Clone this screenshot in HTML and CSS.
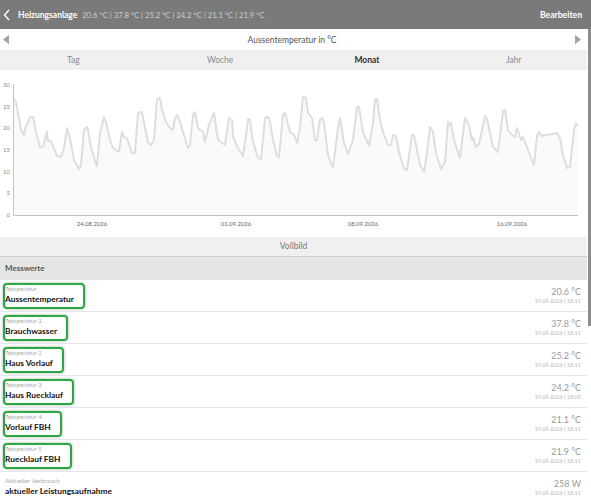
FILE: index.html
```html
<!DOCTYPE html>
<html lang="de">
<head>
    <meta charset="UTF-8">
    <meta name="viewport" content="width=device-width, initial-scale=1.0">
    <title>Heizungsanlage</title>
    <link rel="stylesheet" href="styles.css">
</head>
<body>
    <header class="topbar">
        <svg class="back" width="8" height="12" viewBox="0 0 8 12"><path d="M6 1 L1.5 6 L6 11" fill="none" stroke="#fff" stroke-width="1.4"/></svg>
        <span class="title">Heizungsanlage</span>
        <span class="summary">20.6 °C | 37.8 °C | 25.2 °C | 24.2 °C | 21.1 °C | 21.9 °C</span>
        <span class="edit">Bearbeiten</span>
    </header>

    <main class="content">
        <div class="chart-head">
            <svg width="6" height="9" viewBox="0 0 6 9"><path d="M6 0 L0 4.5 L6 9 Z" fill="#a0a0a0"/></svg>
            <span>Aussentemperatur in °C</span>
            <svg width="6" height="9" viewBox="0 0 6 9"><path d="M0 0 L6 4.5 L0 9 Z" fill="#a0a0a0"/></svg>
        </div>

        <nav class="tabs">
            <span>Tag</span>
            <span>Woche</span>
            <span class="active">Monat</span>
            <span>Jahr</span>
        </nav>

        <div class="chart">
            <svg width="587" height="167" viewBox="0 70 587 167">
                <!-- area + line, one point every few hours -->
                <path class="area" d="M13 215.5 L13,98 16,102 18,113 21,130 24,135 26,125 28,123 30,117 33,117 36,132 40,147 43,147 47,132 48,141 51,141 57,156 61,157 64,148 67,128 70,138 74,160 79,169 81,165 84,130 87,127 88,130 91,147 96,164 97,166 100,133 104,117 106,122 110,140 113,148 117,151 119,151 122,132 124,137 127,138 132,153 135,153 138,113 142,112 144,123 148,142 151,145 154,140 157,99 160,98 162,110 163,112 166,122 170,128 173,130 175,118 177,115 180,122 183,132 187,145 188,148 190,145 193,115 195,112 198,128 200,130 203,132 205,142 209,125 211,120 213,115 214,113 215,120 218,140 225,145 229,118 232,120 233,137 238,148 243,156 247,128 248,119 250,120 253,142 258,158 261,159 265,118 268,117 270,122 273,140 277,156 279,157 283,114 285,113 290,132 294,135 297,143 300,128 303,97 306,98 308,113 312,118 315,140 317,140 320,120 322,118 324,122 328,155 333,168 338,128 340,118 344,143 348,154 353,140 357,107 359,107 363,132 369,146 373,123 375,100 377,99 380,120 383,132 388,145 391,145 393,135 396,136 399,152 404,169 407,170 412,135 414,135 417,150 420,165 424,172 427,153 430,127 433,132 436,153 441,169 445,162 448,122 450,125 451,123 454,140 460,158 465,118 469,125 472,140 473,138 476,147 479,144 485,116 487,119 493,147 498,152 503,111 505,110 508,130 512,135 515,137 517,128 521,140 523,137 528,150 533,163 534,165 537,136 539,132 542,136 557,133 560,138 563,155 567,168 570,167 574,130 576,123 578,126 L578 215.5 Z"/>
                <polyline class="line" points="13,98 16,102 18,113 21,130 24,135 26,125 28,123 30,117 33,117 36,132 40,147 43,147 47,132 48,141 51,141 57,156 61,157 64,148 67,128 70,138 74,160 79,169 81,165 84,130 87,127 88,130 91,147 96,164 97,166 100,133 104,117 106,122 110,140 113,148 117,151 119,151 122,132 124,137 127,138 132,153 135,153 138,113 142,112 144,123 148,142 151,145 154,140 157,99 160,98 162,110 163,112 166,122 170,128 173,130 175,118 177,115 180,122 183,132 187,145 188,148 190,145 193,115 195,112 198,128 200,130 203,132 205,142 209,125 211,120 213,115 214,113 215,120 218,140 225,145 229,118 232,120 233,137 238,148 243,156 247,128 248,119 250,120 253,142 258,158 261,159 265,118 268,117 270,122 273,140 277,156 279,157 283,114 285,113 290,132 294,135 297,143 300,128 303,97 306,98 308,113 312,118 315,140 317,140 320,120 322,118 324,122 328,155 333,168 338,128 340,118 344,143 348,154 353,140 357,107 359,107 363,132 369,146 373,123 375,100 377,99 380,120 383,132 388,145 391,145 393,135 396,136 399,152 404,169 407,170 412,135 414,135 417,150 420,165 424,172 427,153 430,127 433,132 436,153 441,169 445,162 448,122 450,125 451,123 454,140 460,158 465,118 469,125 472,140 473,138 476,147 479,144 485,116 487,119 493,147 498,152 503,111 505,110 508,130 512,135 515,137 517,128 521,140 523,137 528,150 533,163 534,165 537,136 539,132 542,136 557,133 560,138 563,155 567,168 570,167 574,130 576,123 578,126"/>

                <line class="axis" x1="13.5" y1="84" x2="13.5" y2="216"/>
                <line class="axis" x1="13" y1="215.5" x2="578" y2="215.5"/>

                <g class="y-labels">
                    <text x="10" y="87">30</text>
                    <text x="10" y="109">25</text>
                    <text x="10" y="130">20</text>
                    <text x="10" y="152">15</text>
                    <text x="10" y="174">10</text>
                    <text x="10" y="195">5</text>
                    <text x="10" y="217">0</text>
                </g>
                <g class="x-labels">
                    <text x="92" y="226">24.08.2026</text>
                    <text x="236" y="226">01.09.2026</text>
                    <text x="363" y="226">08.09.2026</text>
                    <text x="512" y="226">16.09.2026</text>
                </g>
            </svg>
        </div>

        <div class="fullview">Vollbild</div>
        <div class="section">Messwerte</div>

        <ul class="readings">
            <li class="reading">
                <div class="name-box marked"><div class="label">Temperatur</div><div class="name">Aussentemperatur</div></div>
                <div class="value-box"><div class="value">20.6 °C</div><div class="time">19.09.2026 | 18:11</div></div>
            </li>
            <li class="reading">
                <div class="name-box marked"><div class="label">Temperatur 1</div><div class="name">Brauchwasser</div></div>
                <div class="value-box"><div class="value">37.8 °C</div><div class="time">19.09.2026 | 18:11</div></div>
            </li>
            <li class="reading">
                <div class="name-box marked"><div class="label">Temperatur 2</div><div class="name">Haus Vorlauf</div></div>
                <div class="value-box"><div class="value">25.2 °C</div><div class="time">19.09.2026 | 18:11</div></div>
            </li>
            <li class="reading">
                <div class="name-box marked"><div class="label">Temperatur 3</div><div class="name">Haus Ruecklauf</div></div>
                <div class="value-box"><div class="value">24.2 °C</div><div class="time">19.09.2026 | 18:09</div></div>
            </li>
            <li class="reading">
                <div class="name-box marked"><div class="label">Temperatur 4</div><div class="name">Vorlauf FBH</div></div>
                <div class="value-box"><div class="value">21.1 °C</div><div class="time">19.09.2026 | 18:11</div></div>
            </li>
            <li class="reading">
                <div class="name-box marked"><div class="label">Temperatur 5</div><div class="name">Ruecklauf FBH</div></div>
                <div class="value-box"><div class="value">21.9 °C</div><div class="time">19.09.2026 | 18:11</div></div>
            </li>
            <li class="reading">
                <div class="name-box"><div class="label">Aktueller Verbrauch</div><div class="name">aktueller Leistungsaufnahme</div></div>
                <div class="value-box"><div class="value">258 W</div><div class="time">19.09.2026 | 18:11</div></div>
            </li>
        </ul>
    </main>

    <div class="scroll-thumb"></div>
</body>
</html>
```

FILE: styles.css
```css
:root {
    --header-bg: #7a7a7a;
    --bar-bg: #f0f0f0;
    --section-bg: #e5e5e5;
    --line: #e6e6e6;
    --muted: #9a9a9a;
    --faint: #b8b8b8;
    --mark: #2aa844;
}

body {
    margin: 0;
    width: 591px;
    height: 500px;
    overflow: hidden;
    font-family: Lato, "Open Sans", sans-serif;
    background: #fff;
    color: #222;
    position: relative;
}

.topbar {
    height: 29px;
    background: var(--header-bg);
    display: flex;
    align-items: center;
    padding: 0 9px 0 3px;
    color: #fff;
}

.back {
    margin-right: 7px;
}

.title {
    font-weight: 700;
    font-size: 8.5px;
}

.summary {
    margin-left: 5px;
    font-size: 7.7px;
    color: #cdcdcd;
}

.edit {
    margin-left: auto;
    font-weight: 700;
    font-size: 8.6px;
}

.content {
    width: 587px;
}

.chart-head {
    height: 21px;
    display: flex;
    align-items: center;
    justify-content: space-between;
    padding: 0 6px 0 3px;
    font-size: 8.5px;
    color: #555;
}

.tabs {
    height: 20px;
    background: var(--bar-bg);
    display: grid;
    grid-template-columns: repeat(4, 1fr);
    align-items: center;
    text-align: center;
    font-size: 8.5px;
    color: #8a8a8a;
}

.tabs .active {
    font-weight: 700;
    color: #333;
}

.chart {
    height: 167px;
}

.chart svg {
    display: block;
}

.area {
    fill: #fafafa;
}

.line {
    fill: none;
    stroke: #dedede;
    stroke-width: 2;
    stroke-linejoin: round;
}

.axis {
    stroke: #c4c4c4;
    stroke-width: 1;
}

.y-labels text {
    font-size: 6px;
    fill: #888;
    text-anchor: end;
}

.x-labels text {
    font-size: 6px;
    fill: #666;
    text-anchor: middle;
}

.fullview {
    height: 19px;
    line-height: 19px;
    background: var(--bar-bg);
    border-bottom: 1px solid #cfcfcf;
    text-align: center;
    font-size: 8.5px;
    color: #777;
}

.section {
    height: 23px;
    line-height: 23px;
    background: var(--section-bg);
    padding-left: 5px;
    font-size: 8px;
    font-weight: 700;
    color: #555;
}

.readings {
    list-style: none;
    margin: 0;
    padding: 0;
}

.reading {
    height: 31px;
    border-bottom: 1px solid var(--line);
    display: flex;
    justify-content: space-between;
    align-items: flex-start;
    padding: 0 6px 0 5px;
}

.name-box {
    margin-top: 5px;
    position: relative;
}

.label {
    font-size: 6.3px;
    line-height: 8px;
    color: #aaa;
}

.name {
    font-size: 8.4px;
    line-height: 12px;
    font-weight: 700;
    color: #111;
}

/* green frame drawn over the named sensors */
.marked::after {
    content: "";
    position: absolute;
    top: -2px;
    left: -2px;
    right: -11px;
    bottom: -4px;
    border: 2px solid var(--mark);
    border-radius: 4px;
    box-shadow: 0 0 3px rgba(0, 0, 0, 0.35);
}

.value-box {
    margin-top: 6px;
    text-align: right;
}

.value {
    font-size: 9px;
    line-height: 11px;
    color: var(--muted);
}

.time {
    font-size: 5.5px;
    line-height: 8px;
    color: var(--faint);
}

.scroll-thumb {
    position: absolute;
    left: 588px;
    top: 29px;
    width: 3px;
    height: 297px;
    background: #8c8c8c;
}
```
